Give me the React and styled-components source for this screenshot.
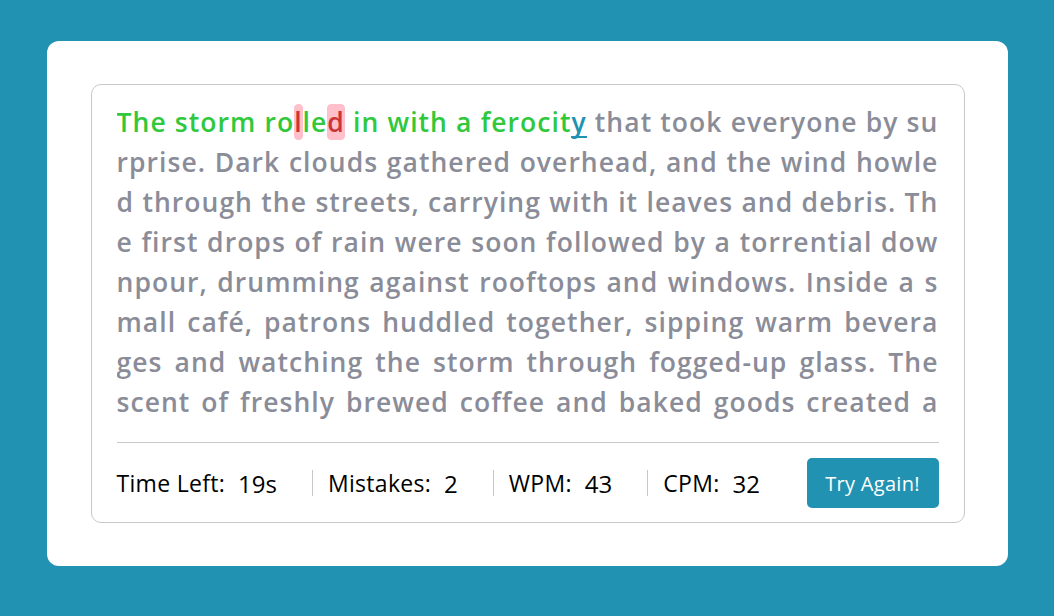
import React from 'react';
import styled, { createGlobalStyle } from 'styled-components';

const GlobalStyle = createGlobalStyle`
  body {
    margin: 0;
    background: #2192b2;
    font-family: 'Open Sans', 'Liberation Sans', sans-serif;
  }
`;

const Page = styled.div`
  display: flex;
  justify-content: center;
  padding-top: 41px;
`;

const Wrapper = styled.div`
  width: 961px;
  padding: 43px 43px 43px 44px;
  box-sizing: border-box;
  background: #fff;
  border-radius: 12px;
`;

const InputField = styled.div`
  border: 1px solid #c8c8c8;
  border-radius: 10px;
  padding: 17px 25px 0;
`;

const TypingText = styled.div`
  max-height: 320px;
  overflow-y: auto;
  scrollbar-width: none;
  font-size: 26.5px;
  font-weight: 600;
  line-height: 40px;
  letter-spacing: 1.04px;
  word-break: break-all;
  color: #8a8c98;

  &::-webkit-scrollbar {
    display: none;
  }
`;

const Line = styled.div`
  text-align: justify;
  text-align-last: ${(p) => (p.last ? 'left' : 'justify')};
`;

const Char = styled.span`
  position: relative;
  color: ${(p) =>
    p.status === 'correct' ? '#30c83c' : p.status === 'incorrect' ? '#cb3439' : p.status === 'active' ? '#2192b2' : 'inherit'};
  background: ${(p) => (p.status === 'incorrect' ? '#ffc0cb' : 'transparent')};
  border-radius: 4px;
  outline: ${(p) => (p.status === 'incorrect' ? '1px solid #fff' : 'none')};

  &::before {
    content: '';
    display: ${(p) => (p.status === 'active' ? 'block' : 'none')};
    position: absolute;
    left: 0;
    bottom: 2px;
    width: 100%;
    height: 2px;
    background: #2192b2;
  }
`;

const Footer = styled.div`
  display: flex;
  align-items: center;
  margin-top: 20px;
  padding: 15px 0 14px;
  border-top: 1px solid #c8c8c8;
`;

const ResultList = styled.ul`
  display: flex;
  align-items: center;
  margin: 0;
  padding: 0;
  list-style: none;
`;

const ResultItem = styled.li`
  display: flex;
  align-items: center;
  height: 26px;
  padding: 0 35px 0 ${(p) => (p.first ? '0' : '15px')};
  border-left: ${(p) => (p.first ? 'none' : '1px solid #c8c8c8')};
`;

const Label = styled.p`
  margin: 0;
  font-size: 23px;
  font-weight: 400;
  letter-spacing: 0.3px;
  color: #000;
`;

const Value = styled.span`
  margin-left: 13px;
  font-size: 24px;
  font-weight: 500;
  color: #000;
`;

const Button = styled.button`
  margin-left: auto;
  width: 132px;
  height: 50px;
  border: none;
  border-radius: 5px;
  background: #2192b2;
  color: #fff;
  font-family: inherit;
  font-size: 20px;
  letter-spacing: 0.3px;
  cursor: pointer;
`;

// the paragraph, split where the reference wraps it
const lines = [
  'The storm rolled in with a ferocity that took everyone by su',
  'rprise. Dark clouds gathered overhead, and the wind howle',
  'd through the streets, carrying with it leaves and debris. Th',
  'e first drops of rain were soon followed by a torrential dow',
  'npour, drumming against rooftops and windows. Inside a s',
  'mall café, patrons huddled together, sipping warm bevera',
  'ges and watching the storm through fogged-up glass. The ',
  'scent of freshly brewed coffee and baked goods created a ',
  'cozy atmosphere, a stark contrast to the chaos outside.',
];

const activeIndex = 34;
const mistakes = [12, 15];

const stats = [
  { label: 'Time Left:', value: '19s' },
  { label: 'Mistakes:', value: '2' },
  { label: 'WPM:', value: '43' },
  { label: 'CPM:', value: '32' },
];

const getStatus = (index) => {
  if (index === activeIndex) return 'active';
  if (index > activeIndex) return 'pending';
  if (mistakes.includes(index)) return 'incorrect';
  return 'correct';
};

const lineOffsets = lines.map((_, i) => lines.slice(0, i).join('').length);

const App = () => {
  return (
    <>
      <GlobalStyle />
      <Page>
        <Wrapper>
          <InputField>
            <TypingText>
              {lines.map((line, lineIndex) => (
                <Line key={lineIndex} last={lineIndex === lines.length - 1}>
                  {line.split('').map((char, i) => {
                    const index = lineOffsets[lineIndex] + i;
                    return (
                      <Char key={index} status={getStatus(index)}>
                        {char}
                      </Char>
                    );
                  })}
                </Line>
              ))}
            </TypingText>
            <Footer>
              <ResultList>
                {stats.map((stat, index) => (
                  <ResultItem key={stat.label} first={index === 0}>
                    <Label>{stat.label}</Label>
                    <Value>{stat.value}</Value>
                  </ResultItem>
                ))}
              </ResultList>
              <Button>Try Again!</Button>
            </Footer>
          </InputField>
        </Wrapper>
      </Page>
    </>
  );
};

export default App;
